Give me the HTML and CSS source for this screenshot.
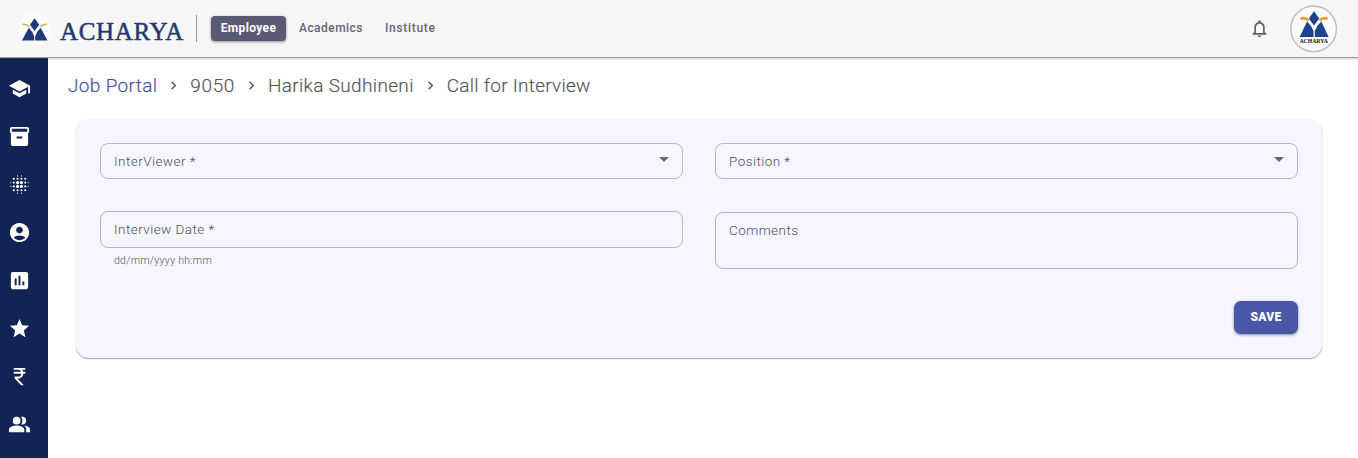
FILE: index.html
```html
<!DOCTYPE html>
<html lang="en">
<head>
<meta charset="utf-8">
<title>Call for Interview</title>
<link rel="stylesheet" href="styles.css">
</head>
<body>
<header class="topbar">
  <div class="brand">
    <svg class="brand-mark" viewBox="0 0 38 34">
      <circle cx="17" cy="17" r="16.500" fill="#fbfbfb"/>
      <g fill="#20387c">
        <path d="M16.600 6.300l4.600 6.400-4.600 6.400-4.600-6.400z"/>
        <path d="M10.800 15.800L4 28.500h12.200v-4q-1.500-5-5.400-8.700z"/>
        <path d="M22.600 15.800L29.500 28.500H17.200v-4q1.500-5 5.400-8.700z"/>
      </g>
      <path d="M4.500 12.300q4-.5 6.500 2.200M28.800 12.300q-4-.5-6.500 2.200" fill="none" stroke="#d9a94e" stroke-width="1.500"/>
    </svg>
    <span class="brand-name">ACHARYA</span>
  </div>
  <nav class="tabs">
    <a class="tab tab-active">Employee</a>
    <a class="tab">Academics</a>
    <a class="tab">Institute</a>
  </nav>
  <div class="user">
    <svg class="bell" viewBox="0 0 24 24"><path d="M12 22c1.100 0 2-.9 2-2h-4c0 1.100.9 2 2 2zm6-6v-5c0-3.070-1.630-5.640-4.500-6.320V4c0-.83-.67-1.500-1.500-1.500s-1.500.67-1.500 1.500v.68C7.640 5.360 6 7.920 6 11v5l-2 2v1h16v-1l-2-2zm-2 1H8v-6c0-2.480 1.510-4.500 4-4.500s4 2.020 4 4.500v6z"/></svg>
    <svg class="avatar" viewBox="0 0 48 48">
      <circle cx="23.600" cy="23.800" r="22.800" fill="#fafafa" stroke="#bdbdbd" stroke-width="1.400"/>
      <g fill="#1d428e">
        <path d="M24 6.200l5.200 7.200-5.200 7.200-5.200-7.200z"/>
        <path d="M17 16.500L9.700 32h13.800v-6q-2-5.500-6.500-9.500z"/>
        <path d="M31.300 16.500L38.600 32H24.800v-6q2-5.500 6.500-9.500z"/>
      </g>
      <path d="M10.600 14q4.500-2.300 8 1.600M37.600 14q-4.500-2.300-8 1.600" fill="none" stroke="#f39a2d" stroke-width="2.600"/>
      <text x="23.700" y="38" class="avatar-text" textLength="28.500" lengthAdjust="spacingAndGlyphs">ACHARYA</text>
    </svg>
  </div>
</header>
<div class="body">
  <aside class="sidebar">
    <svg viewBox="0 0 24 24"><path d="M5 13.180v4L12 21l7-3.820v-4L12 17l-7-3.820zM12 3 1 9l11 6 9-4.910V17h2V9L12 3z"/></svg>
    <svg viewBox="0 0 24 24"><path d="M20 2H4c-1 0-2 .9-2 2v3.010c0 .72.43 1.340 1 1.690V20c0 1.100 1.100 2 2 2h14c.9 0 2-.9 2-2V8.700c.57-.35 1-.97 1-1.690V4c0-1.100-1-2-2-2zm-5 12H9v-2h6v2zm5-7H4V4h16v3z"/></svg>
    <svg viewBox="0 0 24 24">
      <circle cx="10" cy="10" r="1.700"/><circle cx="14" cy="10" r="1.700"/><circle cx="10" cy="14" r="1.700"/><circle cx="14" cy="14" r="1.700"/>
      <circle cx="6" cy="6" r="1.100"/><circle cx="10" cy="6" r="1.100"/><circle cx="14" cy="6" r="1.100"/><circle cx="18" cy="6" r="1.100"/>
      <circle cx="6" cy="18" r="1.100"/><circle cx="10" cy="18" r="1.100"/><circle cx="14" cy="18" r="1.100"/><circle cx="18" cy="18" r="1.100"/>
      <circle cx="6" cy="10" r="1.100"/><circle cx="6" cy="14" r="1.100"/><circle cx="18" cy="10" r="1.100"/><circle cx="18" cy="14" r="1.100"/>
      <circle cx="10" cy="3" r=".6"/><circle cx="14" cy="3" r=".6"/><circle cx="10" cy="21" r=".6"/><circle cx="14" cy="21" r=".6"/>
      <circle cx="3" cy="10" r=".6"/><circle cx="3" cy="14" r=".6"/><circle cx="21" cy="10" r=".6"/><circle cx="21" cy="14" r=".6"/>
    </svg>
    <svg viewBox="0 0 24 24"><path d="M12 2C6.480 2 2 6.480 2 12s4.480 10 10 10 10-4.480 10-10S17.520 2 12 2zm0 4c1.930 0 3.500 1.570 3.500 3.500S13.930 13 12 13s-3.500-1.570-3.500-3.500S10.070 6 12 6zm0 14c-2.030 0-4.430-.82-6.140-2.880C7.550 15.800 9.680 15 12 15s4.450.8 6.140 2.120C16.430 19.180 14.030 20 12 20z"/></svg>
    <svg viewBox="0 0 24 24"><path d="M19 3H5c-1.100 0-2 .9-2 2v14c0 1.100.9 2 2 2h14c1.100 0 2-.9 2-2V5c0-1.100-.9-2-2-2zM9 17H7v-7h2v7zm4 0h-2V7h2v10zm4 0h-2v-4h2v4z"/></svg>
    <svg viewBox="0 0 24 24"><path d="M12 17.270 18.180 21l-1.640-7.030L22 9.240l-7.190-.61L12 2 9.190 8.630 2 9.240l5.460 4.730L5.820 21z"/></svg>
    <svg viewBox="0 0 24 24"><path d="M13.660 7c-.56-1.180-1.760-2-3.160-2H6V3h12v2h-3.260c.48.58.84 1.260 1.050 2H18v2h-2.020c-.25 2.800-2.610 5-5.480 5h-.73l6.730 7h-2.770L7 14v-2h3.500c1.760 0 3.220-1.300 3.460-3H6V7h7.660z"/></svg>
    <svg viewBox="0 0 24 24"><circle cx="9" cy="8" r="4"/><path d="M16.670 13.130C18.040 14.060 19 15.320 19 17v3h4v-3c0-2.180-3.570-3.470-6.330-3.870zM15 12c2.210 0 4-1.790 4-4s-1.790-4-4-4c-.47 0-.91.1-1.330.24C14.500 5.270 15 6.580 15 8s-.5 2.730-1.330 3.760c.42.14.86.24 1.330.24zM9 13c-2.670 0-8 1.340-8 4v3h16v-3c0-2.660-5.330-4-8-4z"/></svg>
  </aside>
  <main class="content">
    <nav class="crumbs">
      <a class="crumb crumb-link">Job Portal</a>
      <svg class="sep" viewBox="0 0 24 24"><path d="M10 6 8.590 7.410 13.170 12l-4.580 4.590L10 18l6-6z"/></svg>
      <span class="crumb crumb-id">9050</span>
      <svg class="sep" viewBox="0 0 24 24"><path d="M10 6 8.590 7.410 13.170 12l-4.580 4.590L10 18l6-6z"/></svg>
      <span class="crumb">Harika Sudhineni</span>
      <svg class="sep" viewBox="0 0 24 24"><path d="M10 6 8.590 7.410 13.170 12l-4.580 4.590L10 18l6-6z"/></svg>
      <span class="crumb crumb-page">Call for Interview</span>
    </nav>
    <form class="card">
      <div class="field"><span>InterViewer *</span><i class="caret"></i></div>
      <div class="field"><span>Position *</span><i class="caret"></i></div>
      <div class="date">
        <div class="field field-date"><span>Interview Date *</span></div>
        <p class="hint">dd/mm/yyyy hh:mm</p>
      </div>
      <div class="field field-area"><span>Comments</span></div>
      <div class="actions"><button type="button" class="save">SAVE</button></div>
    </form>
  </main>
</div>
</body>
</html>
```
FILE: styles.css
```css
* { box-sizing: border-box; }
body { margin: 0; height: 458px; overflow: hidden; background: #fff; font-family: Roboto, sans-serif; display: flex; flex-direction: column; }
.topbar { position: relative; height: 57px; flex: none; display: flex; align-items: center; background: #f6f6f6; box-shadow: 0 1px 1px #9b9c9c, 0 2px 3px rgba(0,0,0,.16); }
.brand { display: flex; align-items: center; width: 197px; height: 27px; padding-left: 18px; border-right: 1px solid #969696; }
.brand-mark { width: 38px; height: 34px; flex: none; }
.brand-name { margin: 6px 0 0 4px; font-family: "Liberation Serif", serif; font-size: 25px; line-height: 28px; letter-spacing: .65px; color: #26386f; -webkit-text-stroke: .5px #26386f; }
.tabs { display: flex; align-items: center; margin-left: 14px; }
.tab { font-size: 12px; font-weight: 500; line-height: 25px; letter-spacing: .45px; color: #646477; margin-right: 22px; }
.tab:last-child { letter-spacing: .7px; }
.tab-active { width: 75px; text-align: center; margin-right: 13px; border-radius: 4px; background: #5a5a72; color: #fff; font-weight: 700; letter-spacing: .35px; box-shadow: 0 1px 3px rgba(0,0,0,.4); }
.user { display: flex; align-items: center; margin-left: auto; padding-right: 20px; gap: 20px; }
.bell { width: 21px; height: 21px; fill: #666; }
.avatar { width: 48px; height: 48px; }
.avatar-text { font: 700 6.500px "Liberation Serif", serif; text-anchor: middle; fill: #111; }
.body { display: flex; flex: 1; }
.sidebar { width: 48px; background: #132353; display: flex; flex-direction: column; gap: 25px; padding: 20px 0 0 8px; }
.sidebar svg { width: 23px; height: 23px; fill: #fff; flex: none; }
.content { flex: 1; padding: 14px 36px 0 28px; }
.crumbs { display: flex; align-items: center; height: 28px; margin-left: -8px; font-size: 19px; font-weight: 300; color: #555; -webkit-text-stroke: .15px; }
.crumb { white-space: nowrap; letter-spacing: .34px; }
.crumb-link { color: #3e4da3; }
.crumb-id { letter-spacing: .6px; }
.crumb-page { letter-spacing: .26px; }
.sep { width: 17px; height: 17px; margin: 1px 8px 0; fill: #555; flex: none; }
.card { margin-top: 20px; height: 239px; padding: 24px; border-radius: 13px; background: #f5f6ff; box-shadow: 0 1px 1px #a3a3ad, 0 1px 2px rgba(0,0,0,.08); display: grid; grid-template-columns: 583px 583px; column-gap: 32px; grid-template-rows: 36px 57px 33px; row-gap: 32px; align-items: start; }
.field { display: flex; justify-content: space-between; height: 36px; border: 1px solid #b7b7cb; border-radius: 8px; padding: 0 13px; font-size: 13.500px; line-height: 35px; font-weight: 300; letter-spacing: .45px; color: #50505e; }
.field-date { height: 37px; }
.field-area { height: 57px; margin-top: 1px; }
.caret { align-self: center; margin: -3px 0 0; border: 5px solid transparent; border-bottom: 0; border-top-color: #666675; }
.hint { margin: 6px 14px 0; font-size: 10.500px; line-height: 14px; font-weight: 300; letter-spacing: .28px; color: #50505e; }
.actions { grid-column: 2; display: flex; justify-content: flex-end; margin-top: 1px; }
.save { width: 64px; height: 33px; border: 0; padding: 0 0 1px; border-radius: 7px; background: #4a57a9; color: #fff; font: 900 12px Roboto, sans-serif; letter-spacing: .3px; box-shadow: 0 1px 3px rgba(0,0,0,.45); }
```
